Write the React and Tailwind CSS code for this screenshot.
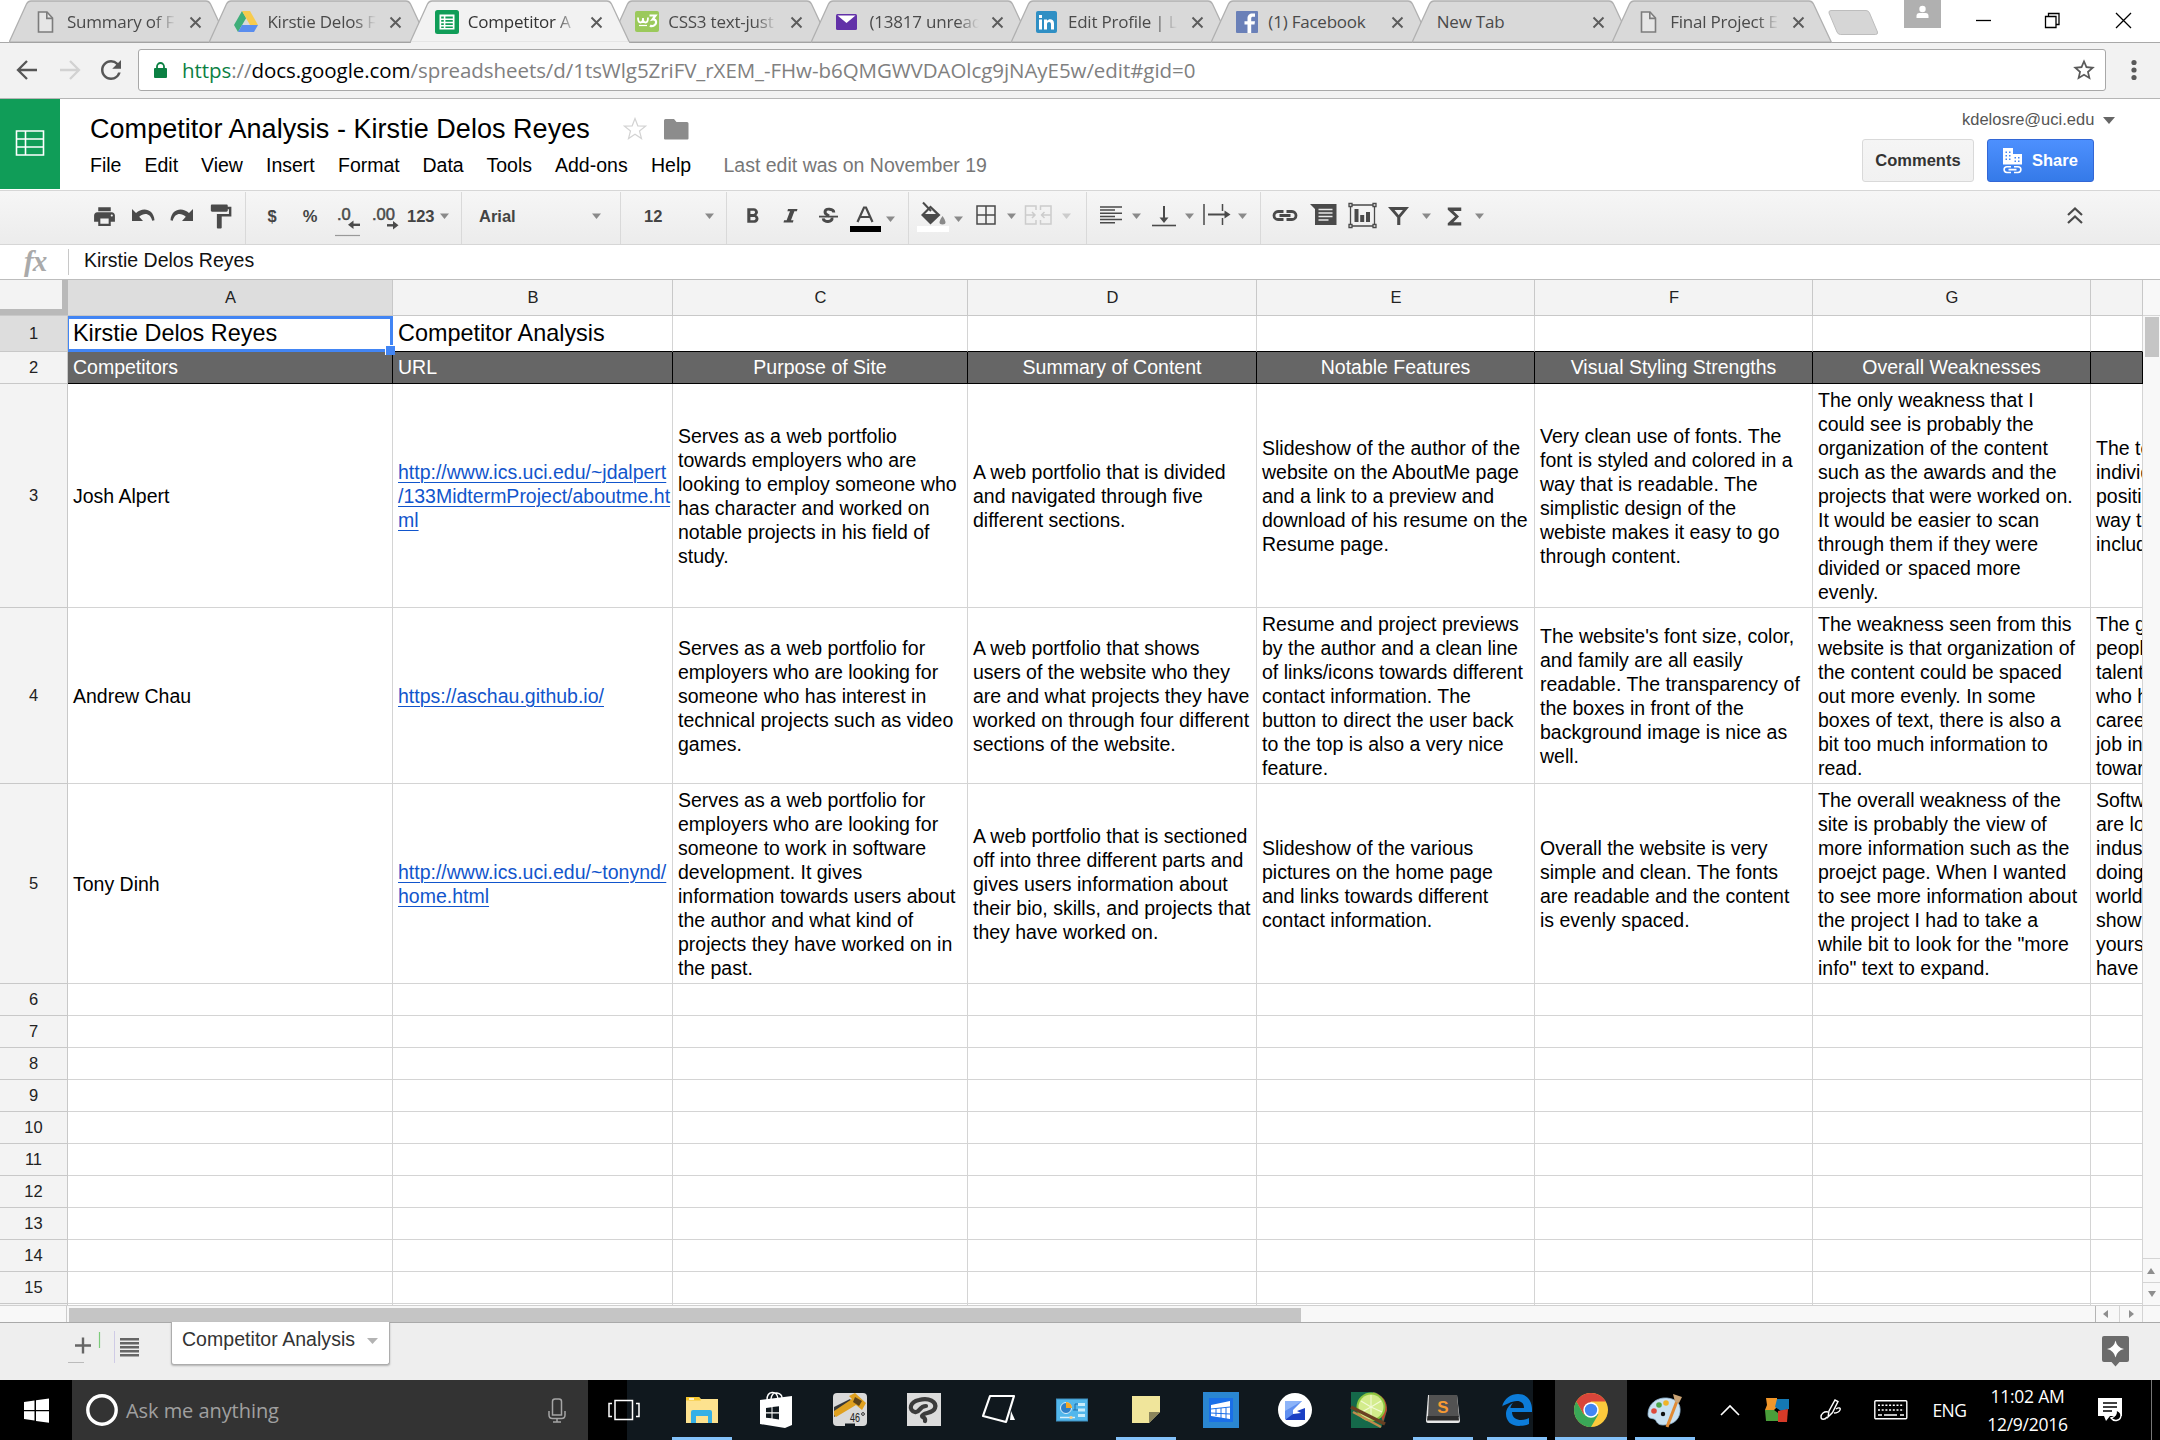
import React from "react";
import { MdPrint, MdFormatPaint, MdFormatBold, MdFunctions, MdStarBorder, MdRefresh } from "react-icons/md";

const UI = "font-['Open_Sans','Noto_Sans',sans-serif]";

/* ---------- browser tabs ---------- */

const PageIcon = () => (
  <svg className="ml-[3px] mr-[13px] h-[24px] w-[17px] shrink-0" viewBox="0 0 17 24">
    <path d="M1.5 2h8.5l5.5 6v14h-14z" fill="#e6e6e6" stroke="#7c7c7c" strokeWidth="1.600" />
    <path d="M9.8 2v6.4h5.6" fill="none" stroke="#7c7c7c" strokeWidth="1.600" />
  </svg>
);

const DriveIcon = () => (
  <svg className="mr-[9px] h-[22px] w-[24px] shrink-0" viewBox="0 0 24 22">
    <path d="M8 0l4.2 7L4 21 0 14z" fill="#3fae79" />
    <path d="M8 0h8l8 14h-8z" fill="#f7cb4d" />
    <path d="M8 14h16l-4 7H4z" fill="#5a8dee" />
  </svg>
);

const SheetsIcon = () => (
  <svg className="mr-[9px] h-[24px] w-[24px] shrink-0" viewBox="0 0 24 24">
    <rect width="24" height="24" rx="2.5" fill="#109d58" />
    <rect x="4.500" y="4.500" width="15" height="15" fill="#fff" />
    <path d="M6.200 6.500h2.600v2H6.200zm4.200 0h7.400v2h-7.400zM6.200 10h2.600v1.800H6.200zm4.200 0h7.400v1.800h-7.400zM6.200 13.200h2.600V15H6.200zm4.200 0h7.400V15h-7.400zM6.200 16.400h2.600v1.700H6.200zm4.200 0h7.400v1.700h-7.400z" fill="#109d58" />
  </svg>
);

const W3Icon = () => (
  <svg className="mr-[9px] h-[21px] w-[24px] shrink-0" viewBox="0 0 24 21">
    <rect width="24" height="21" rx="2" fill="#9bc95b" />
    <path d="M3 6.500c0 3.500.5 5 2.500 5S8 10 8 7c0 3 .5 4.500 2.500 4.500S13 10 13 6.500" fill="none" stroke="#fff" strokeWidth="1.800" />
    <path d="M14.500 4.500h6L17.500 8.500c2.500-.5 4 1 3.500 3.500s-4 4-6 2.500" fill="none" stroke="#fff" strokeWidth="2.200" />
    <path d="M4 14.500h8" stroke="#fff" strokeWidth="1.200" />
  </svg>
);

const MailIcon = () => (
  <svg className="mr-[13px] h-[16px] w-[21px] shrink-0" viewBox="0 0 21 16">
    <rect width="21" height="16" rx="1.500" fill="#6231a8" />
    <path d="M1.500 1.500h18L10.500 9z" fill="#fff" />
  </svg>
);

const LinkedInIcon = () => (
  <svg className="mr-[11px] h-[22px] w-[21px] shrink-0" viewBox="0 0 21 22">
    <rect width="21" height="22" rx="2" fill="#2f8fc4" />
    <path d="M3 8.500h3V18.500H3zM3 4h3v3H3zM8 8.500h3v1.300c1.800-2.400 7-2.300 7 2.700v6h-3v-5.300c0-3-4-2.800-4 0v5.300H8z" fill="#fff" />
  </svg>
);

const FacebookIcon = () => (
  <svg className="mr-[10px] h-[22px] w-[22px] shrink-0" viewBox="0 0 22 22">
    <rect width="22" height="22" rx="1" fill="#6a80b8" />
    <path d="M11.500 22v-8.500H8.500v-3.300h3V7.500c0-3.500 2-5 4.800-5H19v3.300h-2c-1.400 0-1.800.6-1.800 1.800v2.600H19l-.5 3.300h-3.300V22z" fill="#fff" />
  </svg>
);

const TABS = [
  { label: "Summary of F", icon: PageIcon },
  { label: "Kirstie Delos F", icon: DriveIcon },
  { label: "Competitor A", icon: SheetsIcon, active: true },
  { label: "CSS3 text-just", icon: W3Icon },
  { label: "(13817 unread", icon: MailIcon },
  { label: "Edit Profile | L", icon: LinkedInIcon },
  { label: "(1) Facebook", icon: FacebookIcon, short: true },
  { label: "New Tab", icon: null, short: true },
  { label: "Final Project E", icon: PageIcon },
];

function Tab({ tab }) {
  const Icon = tab.icon;
  return (
    <div className={`relative flex h-[43px] w-[200.400px] shrink-0 items-center ${tab.active ? "z-10" : ""}`}>
      <svg className="absolute left-0 top-0 h-[43px] w-[222px]" viewBox="0 0 222 43">
        <path
          d="M0 42.500L17.500 4q1.500-3 4.500-3H197q3 0 4.500 3L219.500 42.500z"
          fill={tab.active ? "#f2f2f2" : "#d9d9d9"}
          stroke="#b0b0b0"
          strokeWidth="1.300"
        />
        <path d="M1 42.500H219" stroke={tab.active ? "#f2f2f2" : "#a3a3a3"} strokeWidth="1.400" />
      </svg>
      <div className="relative flex items-center pl-[25px]">
        {Icon && <Icon />}
        <div
          className={`${UI} h-[26px] overflow-hidden whitespace-pre text-[17px] leading-[26px] tracking-[-0.220px] ${
            tab.active ? "text-[#333]" : "text-[#4a4a4a]"
          } ${tab.short ? "w-[116px]" : "w-[109px] [mask-image:linear-gradient(90deg,#000_80%,transparent)]"}`}
        >
          {tab.label}
        </div>
      </div>
      <svg className="absolute left-[180px] top-[16px] h-[13px] w-[13px]" viewBox="0 0 13 13">
        <path d="M1.500 1.500l10 10m0-10l-10 10" stroke="#5c5c5c" strokeWidth="1.900" />
      </svg>
    </div>
  );
}

function TabStrip() {
  return (
    <div className="flex h-[43px] border-b border-[#a9a9a9] bg-white pl-[9px]">
      {TABS.map((t) => <Tab key={t.label} tab={t} />)}
      <svg className="ml-[14px] mt-[9px] h-[27px] w-[54px] shrink-0" viewBox="0 0 54 27">
        <path d="M4 1.500h35q2.500 0 3.500 2.500l8 19q.5 2.500-2 2.500h-35q-2.500 0-3.500-2.500L2 4q-.5-2.500 2-2.500z" fill="#d6d6d6" stroke="#bdbdbd" />
      </svg>
      <svg className="ml-[23px] h-[28px] w-[37px] shrink-0" viewBox="0 0 37 28">
        <path d="M0 0h37v28H0z" fill="#b0b0b0" />
        <circle cx="18.500" cy="9" r="3.200" fill="#fff" />
        <path d="M12.500 18v-2q0-3 3-3h6q3 0 3 3v2z" fill="#fff" />
      </svg>
      <svg className="ml-[34px] mt-[10px] h-[20px] w-[18px] shrink-0" viewBox="0 0 18 20"><path d="M1 10.500h15" stroke="#000" strokeWidth="1.300" /></svg>
      <svg className="ml-[51px] mt-[12px] h-[17px] w-[17px] shrink-0" viewBox="0 0 17 17">
        <path d="M1.500 4.500h10.500v11H1.500zM4.500 4.500v-3H15v11h-3" fill="none" stroke="#000" strokeWidth="1.300" />
      </svg>
      <svg className="ml-[54px] mt-[12px] h-[17px] w-[17px] shrink-0" viewBox="0 0 17 17">
        <path d="M1 1l15 15M16 1L1 16" stroke="#000" strokeWidth="1.300" />
      </svg>
    </div>
  );
}

function AddressBar() {
  return (
    <div className="flex h-[56px] items-center border-b border-[#b6b6b6] bg-[#f2f2f2] pb-[2px]">
      <svg className="ml-[16px] h-[22px] w-[22px] shrink-0" viewBox="0 0 22 22">
        <path d="M21 11H2.500M11 2L2 11l9 9" fill="none" stroke="#565656" strokeWidth="2.300" />
      </svg>
      <svg className="ml-[21px] h-[22px] w-[22px] shrink-0" viewBox="0 0 22 22">
        <path d="M1 11h18.500M11 2l9 9-9 9" fill="none" stroke="#d2d2d2" strokeWidth="2.300" />
      </svg>
      <MdRefresh className="ml-[15px] size-[30px] shrink-0 text-[#565656]" />
      <div className="ml-[12px] flex h-[42px] w-[1968px] items-center rounded-[3px] border border-[#a8a8a8] bg-white">
        <svg className="ml-[15px] h-[16px] w-[13px] shrink-0" viewBox="0 0 13 16">
          <rect y="6" width="13" height="10" rx="1" fill="#0b8043" />
          <path d="M3 7V4.500a3.500 3.500 0 017 0V7" fill="none" stroke="#0b8043" strokeWidth="1.800" />
        </svg>
        <div className={`${UI} ml-[15px] flex-1 whitespace-pre text-[20.500px] leading-[30px] tracking-[-0.060px] text-[#808080]`}>
          <span className="text-[#0b8043]">https</span>://<span className="text-black">docs.google.com</span>
          /spreadsheets/d/1tsWlg5ZriFV_rXEM_-FHw-b6QMGWVDAOlcg9jNAyE5w/edit#gid=0
        </div>
        <MdStarBorder className="mr-[8px] size-[26px] shrink-0 text-[#5a5a5a]" />
      </div>
      <svg className="ml-[24px] h-[24px] w-[8px] shrink-0" viewBox="0 0 8 24">
        <g fill="#5a5a5a"><circle cx="4" cy="4.500" r="2.600" /><circle cx="4" cy="12" r="2.600" /><circle cx="4" cy="19.500" r="2.600" /></g>
      </svg>
    </div>
  );
}

/* ---------- document header ---------- */

function DocHeader() {
  return (
    <div className="flex h-[91px] bg-white">
      <div className="flex h-[90px] w-[60px] items-center justify-center bg-[#109d58]">
        <svg className="mt-[-3px] h-[26px] w-[30px]" viewBox="0 0 30 26">
          <path d="M1.500 1h27v24h-27zM1.500 9h27M1.500 17h27M10.500 1v24" fill="none" stroke="#fff" strokeWidth="1.600" />
        </svg>
      </div>
      <div className="flex flex-1 flex-col pl-[30px]">
        <div className="flex h-[52px] items-center">
          <div className="mt-[8px] w-[533px] whitespace-pre text-[27px] leading-[36px] tracking-[0.040px] text-black">Competitor Analysis - Kirstie Delos Reyes</div>
          <svg className="mt-[8px] h-[24px] w-[24px]" viewBox="0 0 24 24">
            <path d="M12 1.500l2.800 7.300 7.700.3-6 4.900 2 7.600L12 17.300l-6.500 4.300 2-7.600-6-4.900 7.700-.3z" fill="none" stroke="#d3d3d3" strokeWidth="1.200" />
          </svg>
          <svg className="ml-[17px] mt-[8px] h-[22px] w-[25px]" viewBox="0 0 25 22">
            <path d="M0 2.500Q0 1 1.500 1H10l2.500 3H23q1.500 0 1.500 1.500v15q0 1-1 1H1q-1 0-1-1z" fill="#8c8c8c" />
          </svg>
        </div>
        <div className="flex h-[30px] items-center whitespace-pre text-[19.500px] text-black">
          <span className="w-[54.500px]">File</span>
          <span className="w-[56.500px]">Edit</span>
          <span className="w-[65px]">View</span>
          <span className="w-[72px]">Insert</span>
          <span className="w-[84.500px]">Format</span>
          <span className="w-[64px]">Data</span>
          <span className="w-[68.500px]">Tools</span>
          <span className="w-[96px]">Add-ons</span>
          <span className="w-[72.500px]">Help</span>
          <span className="pb-[1px] text-[#777]">Last edit was on November 19</span>
        </div>
      </div>
      <div className="flex w-[298px] flex-col">
        <div className="mt-[10px] flex h-[20px] items-center pl-[100px] text-[16.500px] text-[#555]">
          <span className="w-[141px] whitespace-pre">kdelosre@uci.edu</span>
          <svg className="mt-[3px] h-[7px] w-[12px]" viewBox="0 0 12 7"><path d="M0 0h12L6 7z" fill="#666" /></svg>
        </div>
        <div className="mt-[10px] flex">
          <div className="flex h-[43px] w-[112px] items-center justify-center rounded-[3px] border border-[#d9d9d9] bg-gradient-to-b from-[#f5f5f5] to-[#f1f1f1] text-[16.500px] font-bold text-[#333]">Comments</div>
          <div className="ml-[13px] flex h-[43px] w-[107px] items-center rounded-[3px] border border-[#3367d6] bg-gradient-to-b from-[#4d90fe] to-[#357ae8] text-[16.500px] font-bold text-white">
            <svg className="ml-[14px] mr-[9px] h-[27px] w-[21px]" viewBox="0 0 21 27">
              <path d="M1 1h10v6h9v10.500H1z" fill="#fff" />
              <path d="M3.500 4.500H5V6H3.500zm3.500 0h1.500V6H7zM3.500 8H5v1.500H3.500zM7 8h1.500v1.500H7zm-3.500 3.500H5V13H3.500zm3.500 0h1.500V13H7zm5.500-1.500H14v1.500h-1.500zm3.500 0h1.500v1.500H16zm-3.500 3.500H14V15h-1.500zm3.500 0h1.500V15H16z" fill="#4285f4" />
              <path d="M9 19.700H5a2.900 2.900 0 000 5.800h4m3-5.800h4a2.900 2.900 0 010 5.800h-4M6.500 22.600h8" fill="none" stroke="#fff" strokeWidth="1.600" />
            </svg>
            Share
          </div>
        </div>
      </div>
    </div>
  );
}

/* ---------- toolbar ---------- */

const INK = "#4a4a4a";

const Draw = ({ w, className, children }) => (
  <svg className={`shrink-0 ${className}`} width={w} height="52" viewBox={`0 0 ${w} 52`}>{children}</svg>
);

const Caret = ({ className, low, faint }) => (
  <Draw w={9} className={className}>
    <path d={low ? "M0 24.500h9l-4.500 5.500z" : "M0 21.500h9l-4.500 5.500z"} fill={faint ? "#ccc" : "#8a8a8a"} />
  </Draw>
);

const Glyph = ({ className, children }) => (
  <div className={`flex h-[49px] shrink-0 items-center justify-center text-[#4a4a4a] ${className}`}>{children}</div>
);

const Label = ({ className, children }) => (
  <div className={`flex h-[49px] shrink-0 items-center whitespace-pre text-[16.500px] font-bold text-[#444] ${className}`}>{children}</div>
);

function Toolbar() {
  return (
    <div className="flex h-[55px] border-y border-[#d6d6d6] bg-gradient-to-b from-[#f6f6f6] to-[#ececec] pt-[1px]">
      <div className="flex w-[246px] border-r border-[#d9d9d9]">
        <Glyph className="ml-[94px] w-[21px]"><MdPrint className="size-[25px] shrink-0" /></Glyph>
        <Draw w={23} className="ml-[17px]">
          <path d="M0 17v12h11l-3.800-4.200c5-4.300 11-3.800 13 4l2.300-.6C21.500 16.500 10.500 15 4 21z" fill={INK} />
        </Draw>
        <Draw w={23} className="ml-[15px]">
          <path d="M23 17v12H12l3.800-4.200c-5-4.300-11-3.800-13 4L.5 28.200C1.500 16.500 12.500 15 19 21z" fill={INK} />
        </Draw>
        <Glyph className="ml-[16px] w-[22px]"><MdFormatPaint className="size-[29px] shrink-0" /></Glyph>
      </div>
      <div className="flex w-[216px] border-r border-[#d9d9d9]">
        <Label className="ml-[17px] w-[18px] justify-center">$</Label>
        <Label className="ml-[19px] w-[20px] justify-center">%</Label>
        <Draw w={26} className="ml-[15px]">
          <text x="2" y="28" fontFamily="Liberation Sans" fontSize="16.500" fill={INK} stroke={INK} strokeWidth=".5">.0</text>
          <path d="M25 32.800H15" stroke={INK} strokeWidth="2.400" /><path d="M18.500 28.500v8.600l-5.500-4.300z" fill={INK} />
          <path d="M0 43.500h25" stroke="#999" strokeWidth="1.200" />
        </Draw>
        <Draw w={28} className="ml-[11px]">
          <text x="0" y="28" fontFamily="Liberation Sans" fontSize="16.500" fill={INK} stroke={INK} strokeWidth=".5">.00</text>
          <path d="M15 33.300h9" stroke={INK} strokeWidth="2.400" /><path d="M21 29v8.600l5.500-4.300z" fill={INK} />
        </Draw>
        <Label className="ml-[7px] w-[27px]">123</Label>
        <Caret className="ml-[6px]" />
      </div>
      <div className="flex w-[159px] border-r border-[#d9d9d9]">
        <Label className="ml-[17px] w-[80px]">Arial</Label>
        <Caret className="ml-[33px]" />
      </div>
      <div className="flex w-[106px] border-r border-[#d9d9d9]">
        <Label className="ml-[23px] w-[24px]">12</Label>
        <Caret className="ml-[37px]" />
      </div>
      <div className="flex w-[182px] border-r border-[#d9d9d9]">
        <Glyph className="ml-[17px] w-[16px]"><MdFormatBold className="size-[25px] shrink-0" /></Glyph>
        <Draw w={18} className="ml-[22px]">
          <path d="M6 17h9.500l-.6 2.300h-2.500l-3.400 9h2.500l-.6 2.300H1.500l.6-2.300h2.500l3.400-9H5.400z" fill={INK} />
        </Draw>
        <Draw w={19} className="ml-[19px]">
          <path d="M14.800 20.500c0-4-8.500-4.600-8.800-.6-.2 2.600 2.500 3.200 4.200 3.900M13 25.500c1.200 5-8.500 5.500-8.800.8" fill="none" stroke={INK} strokeWidth="2.900" />
          <path d="M0 24.600h19" stroke={INK} strokeWidth="1.800" />
        </Draw>
        <Draw w={32} className="ml-[12px]">
          <path d="M7.500 30L14 15.500h2L22.500 30M10.300 25h9.500" fill="none" stroke={INK} strokeWidth="2.200" />
          <path d="M0 34h31v6H0z" fill="#000" />
        </Draw>
        <Caret className="ml-[4px]" low />
      </div>
      <div className="flex w-[178px] border-r border-[#d9d9d9]">
        <Draw w={32} className="ml-[8px]">
          <path d="M13.500 13.500l10 9.500-10 9.500L4 23z" fill={INK} />
          <path d="M13.500 16.500l5.500 5.500H8z" fill="#f2f2f2" />
          <path d="M6 10.500l8 8.500" stroke={INK} strokeWidth="2" />
          <path d="M25.500 24q6 8.500 0 8.500t0-8.500z" fill="#8a8a8a" />
          <path d="M0 34h32v6H0z" fill="#fff" />
        </Draw>
        <Caret className="ml-[5px]" low />
        <Draw w={21} className="ml-[13px]">
          <path d="M1 14h18v18H1zM10 14v18M1 23h18" fill="none" stroke={INK} strokeWidth="1.500" />
        </Draw>
        <Caret className="ml-[10px]" />
        <Draw w={29} className="ml-[8px]">
          <path d="M12 18v-4H1.500v18H12v-4M16.500 18v-4H27v18H16.500v-4M2 23h9M8 20l3 3-3 3M27 23h-9M20.500 20l-3 3 3 3" fill="none" stroke="#ccc" strokeWidth="1.500" />
        </Draw>
        <Caret className="ml-[9px]" faint />
      </div>
      <div className="flex w-[174px] border-r border-[#d9d9d9]">
        <Draw w={22} className="ml-[13px]">
          <path d="M0 15h22M0 18h15M0 21.200h22M0 24.400h15M0 27.600h22M0 30.800h15" stroke={INK} strokeWidth="1.500" />
        </Draw>
        <Caret className="ml-[10px]" />
        <Draw w={26} className="ml-[10px]">
          <path d="M13 14v14" stroke={INK} strokeWidth="2" /><path d="M8.500 25.500h9L13 31z" fill={INK} />
          <path d="M1 33.500h24" stroke={INK} strokeWidth="1.600" />
        </Draw>
        <Caret className="ml-[8px]" />
        <Draw w={28} className="ml-[9px]">
          <path d="M1 12v21M19.500 12v7M19.500 26v7" stroke={INK} strokeWidth="1.500" />
          <path d="M5 22.500h17" stroke={INK} strokeWidth="2" /><path d="M21.500 18.500v8l6-4z" fill={INK} />
        </Draw>
        <Caret className="ml-[7px]" />
      </div>
      <div className="flex flex-1">
        <Draw w={29} className="ml-[10px]">
          <path d="M12.500 19.500H7a4 4 0 000 8h5.500M15.500 19.500H21a4 4 0 010 8h-5.500M8.500 23.500h11" fill="none" stroke={INK} strokeWidth="2.800" />
        </Draw>
        <Draw w={28} className="ml-[10px]">
          <path d="M0 12h26.500v21H5V17z" fill={INK} />
          <path d="M8.500 17.500h14M8.500 21h14M8.500 24.500h14M8.500 28h10" stroke="#e8e8e8" strokeWidth="1.300" />
        </Draw>
        <Draw w={29} className="ml-[10px]">
          <path d="M2.500 13h24v21h-24z" fill="none" stroke={INK} strokeWidth="1.300" />
          <path d="M6.500 17h4v13h-4zM12.200 23h4v7h-4zM18 20h4v10h-4z" fill={INK} />
          <path d="M1 11.500h3v3H1zM25 11.500h3v3h-3zM1 32.500h3v3H1zM25 32.500h3v3h-3z" fill="#f2f2f2" stroke={INK} strokeWidth="1.300" />
        </Draw>
        <Draw w={22} className="ml-[11px]">
          <path d="M0 15h21l-8.700 10.500V33H9.200v-7.500zM6.500 18l4.200 5 4.200-5z" fill={INK} fillRule="evenodd" />
        </Draw>
        <Caret className="ml-[12px]" />
        <Glyph className="ml-[15px] w-[16px]"><MdFunctions className="size-[27px] shrink-0" /></Glyph>
        <Caret className="ml-[13px]" />
        <Draw w={18} className="ml-[582px]">
          <path d="M2 23l7-6.500 7 6.500M2 31l7-6.500 7 6.500" fill="none" stroke={INK} strokeWidth="2.200" />
        </Draw>
      </div>
    </div>
  );
}

function FormulaBar() {
  return (
    <div className="flex h-[35px] items-center border-b border-[#bdbdbd] bg-white">
      <div className="w-[68px] pb-[3px] pl-[24px] font-['Liberation_Serif',serif] text-[29px] font-bold italic leading-[30px] tracking-[-1px] text-[#aaa]">fx</div>
      <div className="h-[26px] w-px bg-[#c8c8c8]" />
      <div className="whitespace-pre pb-[3px] pl-[15px] text-[19.500px] text-[#111]">Kirstie Delos Reyes</div>
    </div>
  );
}

/* ---------- sheet ---------- */

const COLS = [
  ["A", "w-[325px]"], ["B", "w-[280px]"], ["C", "w-[295px]"], ["D", "w-[289px]"],
  ["E", "w-[278px]"], ["F", "w-[278px]"], ["G", "w-[278px]"], ["", "w-[52px]"],
];

const HEADINGS = ["Competitors", "URL", "Purpose of Site", "Summary of Content", "Notable Features", "Visual Styling Strengths", "Overall Weaknesses", ""];

const ROWS = [
  {
    n: 3, h: "h-[224px]",
    cells: [
      ["Josh Alpert"],
      ["http://www.ics.uci.edu/~jdalpert", "/133MidtermProject/aboutme.ht", "ml"],
      ["Serves as a web portfolio", "towards employers who are", "looking to employ someone who", "has character and worked on", "notable projects in his field of", "study."],
      ["A web portfolio that is divided", "and navigated through five", "different sections."],
      ["Slideshow of the author of the", "website on the AboutMe page", "and a link to a preview and", "download of his resume on the", "Resume page."],
      ["Very clean use of fonts. The", "font is styled and colored in a", "way that is readable. The", "simplistic design of the", "webiste makes it easy to go", "through content."],
      ["The only weakness that I", "could see is probably the", "organization of the content", "such as the awards and the", "projects that were worked on.", "It would be easier to scan", "through them if they were", "divided or spaced more", "evenly."],
      ["The te", "individ", "positi", "way to", "includ"],
    ],
  },
  {
    n: 4, h: "h-[176px]",
    cells: [
      ["Andrew Chau"],
      ["https://aschau.github.io/"],
      ["Serves as a web portfolio for", "employers who are looking for", "someone who has interest in", "technical projects such as video", "games."],
      ["A web portfolio that shows", "users of the website who they", "are and what projects they have", "worked on through four different", "sections of the website."],
      ["Resume and project previews", "by the author and a clean line", "of links/icons towards different", "contact information. The", "button to direct the user back", "to the top is also a very nice", "feature."],
      ["The website's font size, color,", "and family are all easily", "readable. The transparency of", "the boxes in front of the", "background image is nice as", "well."],
      ["The weakness seen from this", "website is that organization of", "the content could be spaced", "out more evenly. In some", "boxes of text, there is also a", "bit too much information to", "read."],
      ["The g", "people", "talent", "who h", "career", "job in", "toward"],
    ],
  },
  {
    n: 5, h: "h-[200px]",
    cells: [
      ["Tony Dinh"],
      ["http://www.ics.uci.edu/~tonynd/", "home.html"],
      ["Serves as a web portfolio for", "employers who are looking for", "someone to work in software", "development. It gives", "information towards users about", "the author and what kind of", "projects they have worked on in", "the past."],
      ["A web portfolio that is sectioned", "off into three different parts and", "gives users information about", "their bio, skills, and projects that", "they have worked on."],
      ["Slideshow of the various", "pictures on the home page", "and links towards different", "contact information."],
      ["Overall the website is very", "simple and clean. The fonts", "are readable and the content", "is evenly spaced."],
      ["The overall weakness of the", "site is probably the view of", "more information such as the", "proejct page. When I wanted", "to see more information about", "the project I had to take a", "while bit to look for the \"more", "info\" text to expand."],
      ["Softwa", "are lo", "indust", "doing", "world", "show", "yourse", "have"],
    ],
  },
];

const RowHead = ({ n, active }) => (
  <div className={`flex w-[68px] shrink-0 items-center justify-center border-b border-r border-[#c8c8c8] text-[16.500px] text-[#222] ${active ? "bg-[#ddd]" : "bg-[#f3f3f3]"}`}>{n}</div>
);

function Sheet() {
  return (
    <div className="h-[1025px] w-[2143px] shrink-0 overflow-hidden bg-white">
      <div className="flex h-[36px]">
        <div className="h-[36px] w-[68px] shrink-0 border-b border-[#c8c8c8] bg-[#b9b9b9] pb-[6px] pr-[6px]"><div className="h-[29px] bg-[#f3f3f3]" /></div>
        {COLS.map(([c, w], i) => (
          <div key={i} className={`flex shrink-0 items-center justify-center border-b border-r border-[#c8c8c8] pb-px pl-px text-[16.500px] text-[#222] ${w} ${i === 0 ? "bg-[#ddd]" : "bg-[#f3f3f3]"}`}>{c}</div>
        ))}
      </div>
      <div className="relative flex h-[36px]">
        <RowHead n={1} active />
        {COLS.map(([, w], i) => (
          <div key={i} className={`flex shrink-0 items-center whitespace-pre border-b border-r border-b-black border-r-[#d4d4d4] pl-[5px] pt-px text-[23.400px] text-black ${w}`}>
            {["Kirstie Delos Reyes", "Competitor Analysis"][i]}
          </div>
        ))}
        <div className="absolute left-[68px] top-0 z-10 h-[36px] w-[325px] border-y-[3px] border-l border-r-[3px] border-[#4285f4]" />
        <div className="absolute left-[385px] top-[29px] z-10 h-[10px] w-[10px] border-l border-t border-white bg-[#4285f4]" />
      </div>
      <div className="flex h-[32px]">
        <RowHead n={2} />
        {COLS.map(([, w], i) => (
          <div key={i} className={`flex shrink-0 items-center whitespace-pre border-b border-r border-black bg-[#666] pt-px text-[19.500px] text-white ${w} ${i < 2 ? "pl-[5px]" : "justify-center"}`}>{HEADINGS[i]}</div>
        ))}
      </div>
      {ROWS.map((r) => (
        <div key={r.n} className={`flex ${r.h}`}>
          <RowHead n={r.n} />
          {r.cells.map((lines, i) => (
            <div key={i} className={`flex shrink-0 flex-col justify-center overflow-hidden whitespace-pre border-b border-r border-[#d4d4d4] pl-[5px] text-[19.500px] leading-[24px] ${COLS[i][1]} ${i === 1 ? "text-[#1155cc] underline decoration-1 underline-offset-[3px]" : "text-black"}`}>
              {lines.map((l) => <div key={l}>{l}</div>)}
            </div>
          ))}
        </div>
      ))}
      {[6, 7, 8, 9, 10, 11, 12, 13, 14, 15, ""].map((n) => (
        <div key={n} className="flex h-[32px]">
          <RowHead n={n} />
          {COLS.map(([, w], i) => <div key={i} className={`shrink-0 border-b border-r border-[#d4d4d4] ${w}`} />)}
        </div>
      ))}
    </div>
  );
}

const Arrow = ({ d }) => (
  <svg className="h-[10px] w-[10px]" viewBox="0 0 10 10"><path d={d} fill="#8e8e8e" /></svg>
);

function VerticalScroll() {
  return (
    <div className="flex flex-1 flex-col bg-[#f8f8f8]">
      <div className="h-[36px] border-b border-[#d6d6d6]" />
      <div className="ml-[2px] mt-px h-[40px] w-[14px] bg-[#c5c5c5]" />
      <div className="flex-1" />
      <div className="flex h-[24px] items-center justify-center border-t border-[#d4d4d4] pr-px"><Arrow d="M5 2l4 6H1z" /></div>
      <div className="flex h-[23px] items-center justify-center border-t border-[#d4d4d4]"><Arrow d="M5 8l4-6H1z" /></div>
    </div>
  );
}

function HorizontalScroll() {
  return (
    <div className="flex h-[18px] border-b border-t border-b-[#a9a9a9] border-t-[#d0d0d0] bg-[#f8f8f8]">
      <div className="w-[67px] border-r border-[#ccc]" />
      <div className="ml-[2px] mt-[2px] h-[14px] w-[1232px] bg-[#c5c5c5]" />
      <div className="flex-1" />
      <div className="flex w-[24px] items-center justify-center border-l border-[#b5b5b5] pr-[3px]"><Arrow d="M2 5l5-4v8z" /></div>
      <div className="flex w-[24px] items-center justify-center border-x border-[#d4d4d4]"><Arrow d="M8 5L3 1v8z" /></div>
      <div className="w-[17px]" />
    </div>
  );
}

function SheetTabs() {
  return (
    <div className="flex h-[57px] bg-[#eee]">
      <svg className="ml-[68px] mt-[8px] h-[34px] w-[48px]" viewBox="0 0 48 34">
        <path d="M7 14.500h16M15 6.500v16" stroke="#666" strokeWidth="2.400" />
        <path d="M31.500 1v16" stroke="#7ccb7a" strokeWidth="1.200" />
        <path d="M46.500 0v32" stroke="#cfcbe6" />
        <path d="M0 31.500h16" stroke="#bbb" />
      </svg>
      <svg className="ml-[4px] mt-[14px] h-[20px] w-[19px]" viewBox="0 0 19 20">
        <path d="M0 2.200h19M0 6.200h19M0 10.200h19M0 14.200h19M0 18.200h19" stroke="#666" strokeWidth="2.600" />
      </svg>
      <div className="-mt-px ml-[32px] flex h-[43px] w-[219px] justify-between rounded-b-[3px] border border-t-0 border-[#adadad] bg-white pl-[10px] pr-[11px] shadow-[0_1px_2px_rgba(0,0,0,.25)]">
        <span className="whitespace-pre pt-[5px] text-[19.500px] leading-[24px] tracking-[0.040px] text-[#333]">Competitor Analysis</span>
        <svg className="mt-[16px] h-[6px] w-[11px]" viewBox="0 0 11 6"><path d="M0 0h11L5.500 6z" fill="#b3b3b3" /></svg>
      </div>
      <svg className="ml-[1712px] mt-[13px] h-[32px] w-[27px]" viewBox="0 0 27 32">
        <path d="M2 0h23q2 0 2 2v22q0 2-2 2h-7.500l-4 4.500-4-4.500H2q-2 0-2-2V2q0-2 2-2z" fill="#6b6b6b" />
        <path d="M13.500 4.500q1.500 7 8.500 8.500-7 1.500-8.500 8.500Q12 14.500 5 13q7-1.500 8.500-8.500z" fill="#fff" />
      </svg>
    </div>
  );
}

/* ---------- taskbar ---------- */

const APPS = [
  {
    name: "files", open: true,
    art: (
      <>
        <path d="M-16-13h13l2 2h17v24h-32z" fill="#fde28f" /><path d="M-16-13h13l2 3.500h-15z" fill="#f5c62f" />
        <path d="M-13-11h5" stroke="#fff" strokeWidth="1.500" />
        <path d="M-11 13V2q0-2 2-2H8q2 0 2 2v11H6V6H-6v7z" fill="#35b0e6" />
      </>
    ),
  },
  {
    name: "store",
    art: (
      <>
        <path d="M-16-10l32-4v29l-7 3-25-4z" fill="#fff" />
        <path d="M-9-10q0-7 5-7.500t6 6M-5-11q1-7 6-6t5 5" fill="none" stroke="#fff" strokeWidth="1.400" />
        <path d="M-10-2l5.500-.7v5H-10zM-3.500-2.900l6.500-.8v6H-3.500zM-10 3.500h5.500v4.800l-5.500-.6zM-3.500 3.500H3v6l-6.500-.9z" fill="#10181e" />
      </>
    ),
  },
  {
    name: "thermal",
    art: (
      <>
        <rect x="-17" y="-17" width="34" height="33" rx="4" fill="#d9d9d9" /><path d="M-5 13.500H5v3H-5z" fill="#10181e" />
        <path d="M-16-3L0-11l4 5-20 13z" fill="#383838" />
        <path d="M-16 1L2-11l-3-3 6-3L16-7l-4 7-6-5-20 12-2-2z" fill="#dfa01f" /><path d="M5-13l7 4-3 5-6-4z" fill="#5f4418" />
        <text x="0" y="12" fontFamily="Liberation Sans" fontSize="12" textLength="10" lengthAdjust="spacingAndGlyphs" fill="#222">46</text>
        <circle cx="13" cy="4" r="1.400" fill="none" stroke="#333" />
      </>
    ),
  },
  {
    name: "studio",
    art: (
      <>
        <path d="M-17-17h34v33h-34z" fill="#dcdcdc" />
        <path d="M-9 2C-16 0-14-8-5-10 5-13 13-8 11-2 9 4-1 2-2 6 -2 8 2 7 1 11M-9 2C-4 3-5-4 2-4" fill="none" stroke="#3c3c3c" strokeWidth="4.200" strokeLinecap="round" />
      </>
    ),
  },
  {
    name: "tablet",
    art: <><path d="M-8-14H16L8 12l-23-6z" fill="none" stroke="#fff" strokeWidth="2.200" strokeLinejoin="round" /><path d="M13 1l4 9h-5z" fill="#fff" /></>,
  },
  {
    name: "panel",
    art: (
      <>
        <rect x="-15.500" y="-11" width="31" height="22" fill="#52b7ec" stroke="#3f8fc0" />
        <circle cx="-6" cy="-2" r="5.500" fill="#2f80c8" stroke="#d9f0fc" /><path d="M-6-2v-6a6 6 0 016 6z" fill="#f6a623" />
        <path d="M6-7h7v3H6zM6-1.500h7v3H6zM6 4h7v3H6z" fill="#c8ecfb" /><path d="M1 0h2v-6h3M3 0h3" stroke="#1c6fae" fill="none" />
        <path d="M-12 7.500H3" stroke="#d9f0fc" strokeWidth="1.500" /><circle cx="-1" cy="7.500" r="1.600" fill="#f6d08a" />
      </>
    ),
  },
  {
    name: "notes", open: true,
    art: <><path d="M-14-14h28V2L3 13h-17z" fill="#f0e59b" /><path d="M14 2H3v11z" fill="#8b855c" /></>,
  },
  {
    name: "news",
    art: (
      <>
        <path d="M-18-18h36v36h-36z" fill="#2a86d1" /><path d="M-12-12h24v24h-24z" fill="#1a6fe8" />
        <path d="M-10-5L9-9V9l-19-3z" fill="#fff" /><path d="M-10-1L9-3M-10 3l19 1M-5-1v7M0-2V8M5-2V9" stroke="#1a6fe8" />
      </>
    ),
  },
  {
    name: "gsuite",
    art: (
      <>
        <circle r="17" fill="#fff" /><path d="M-10-9H7L-2 0v4l-2 5h-6z" fill="#5f8ff0" /><path d="M-10-9H7l-5 3-12 7z" fill="#8db4f8" />
        <path d="M10-2v12H-10L-2 4l8-1-4-2z" fill="#1a3fc4" />
      </>
    ),
  },
  {
    name: "lime",
    art: (
      <>
        <path d="M-18-18h24q12 6 12 18-2 10-6 18h-30z" fill="#15694a" /><path d="M4-18q14 4 14 18l-4 12z" fill="#b54a32" />
        <circle cx="2" cy="-3" r="14.500" fill="#8cc63f" /><circle cx="2" cy="-3" r="12.500" fill="#d3ec8c" />
        <path d="M2-3V-15M2-3l10-6M2-3l-10-6M2-3l11 5M2-3v11M2-3L-9 3" stroke="#f2fad6" strokeWidth="1.100" />
        <path d="M-18-3L16 14" stroke="#6a4022" strokeWidth="3.500" /><path d="M-16 2L12 17" stroke="#c08a4c" strokeWidth="2.500" />
      </>
    ),
  },
  {
    name: "sublime", open: true,
    art: (
      <>
        <path d="M-15-15h29l3 26q0 2-2 2h-30q-2 0-2-2z" fill="#e8e8e8" /><path d="M-14-15h28l2 22h-31z" fill="#525252" /><path d="M-15.500 6h31l.5 4.500h-32z" fill="#2c2c2c" />
        <text x="-5.700" y="2.500" fontFamily="Liberation Sans" fontWeight="bold" fontSize="17" fill="#f79a33">S</text>
      </>
    ),
  },
  {
    name: "edge", open: true,
    art: <path d="M-15-3C-13-12-6-16 1-16 10-16 15-9 15-1v3H-5c0 6 5 8 9 8 3 0 6-1 8-2v6c-3 1.500-7 2-10 2-8 0-13-5-13-12 0-5 3-9 7-11-2 2-2.500 4-2.500 5H7c0-5-3-7-7-7-6 0-11 4-15 5z" fill="#0c7cd9" />,
  },
  {
    name: "chrome", open: true, active: true,
    art: (
      <>
        <circle r="17" fill="#fcc93c" /><path d="M-14.700-8.500A17 17 0 0114.700-8.500H0L-7.400 4.200z" fill="#d9453a" />
        <path d="M-14.700-8.500A17 17 0 000 17L7.400 4.200-7.400 4.200z" fill="#3aa757" />
        <circle r="7.700" fill="#fff" /><circle r="6.200" fill="#4285f4" />
      </>
    ),
  },
  {
    name: "paint", open: true,
    art: (
      <>
        <path d="M2-12C12-11 16-6 15 2S8 15-2 15c-7 0-6-5-9-6s-6 0-6-5C-17-6-8-13 2-12z" fill="#c9e1f2" stroke="#8fb4d0" strokeWidth=".8" />
        <circle cx="-11" cy="1" r="2.800" fill="#dd4a3c" /><circle cx="-6" cy="-5" r="2.800" fill="#4ba64a" /><circle cx="1" cy="-7" r="2.800" fill="#f0b429" />
        <circle cx="-2" cy="4" r="2.200" fill="#111" />
        <path d="M12-9L2 17" stroke="#e08a35" strokeWidth="3" /><path d="M8-16l9 3-3 6-4-1z" fill="#caa374" />
      </>
    ),
  },
];

function Taskbar() {
  return (
    <div className={`${UI} flex h-[60px] bg-[linear-gradient(90deg,#000_627px,#10181e_627px,#10181e_1533px,#000_1533px)] text-white`}>
      <div className="flex w-[72px] items-center justify-center">
        <svg className="h-[25px] w-[25px]" viewBox="0 0 25 25"><path d="M0 4l10.500-1.500V12H0zM12 2.200L25 .5V12H12zM0 13.300h10.500v9.200L0 21zM12 13.300h13v11.500L12 23z" fill="#fff" /></svg>
      </div>
      <div className="flex w-[516px] items-center bg-[#333]">
        <svg className="ml-[13px] h-[34px] w-[34px]" viewBox="0 0 34 34"><circle cx="17" cy="17" r="14.200" fill="none" stroke="#fff" strokeWidth="3.400" /></svg>
        <span className="ml-[7px] w-[422px] whitespace-pre pt-[2px] text-[20px] tracking-[-0.060px] text-[#a0a0a0]">Ask me anything</span>
        <svg className="h-[25px] w-[18px]" viewBox="0 0 18 25">
          <path d="M4.500 3.500q0-2.500 2.500-2.500h4q2.500 0 2.500 2.500V17h-9zM1 13v4q0 3.500 3.500 3.500h9q3.500 0 3.500-3.500v-4M9 20.500V24M5 24h8" fill="none" stroke="#a5a5a5" strokeWidth="1.500" />
        </svg>
      </div>
      <div className="flex w-[76.500px] items-center pl-[20px]">
        <svg className="h-[22px] w-[32px]" viewBox="0 0 32 22">
          <path d="M7 1.500h17.500v19H7zM4 4.500H1v13h3M28 4.500h3v13h-3" fill="none" stroke="#fff" strokeWidth="1.500" />
        </svg>
      </div>
      {APPS.map((a) => (
        <div key={a.name} className="flex w-[74.150px] shrink-0 flex-col items-center">
          <div className={`flex h-[57px] w-[72px] items-center justify-center pt-[3px] ${a.active ? "bg-[#333]" : ""}`}>
            <svg className="h-[40px] w-[40px]" viewBox="-20 -20 40 40">{a.art}</svg>
          </div>
          {a.open && <div className={`h-[3px] bg-[#83c1f9] ${a.active ? "w-[72px]" : "w-[60px]"}`} />}
        </div>
      ))}
      <div className="flex flex-1 items-center">
        <svg className="ml-[18px] h-[12px] w-[20px] shrink-0" viewBox="0 0 20 12"><path d="M1 11l9-9 9 9" fill="none" stroke="#fff" strokeWidth="1.600" /></svg>
        <svg className="ml-[25px] h-[24px] w-[24px] shrink-0" viewBox="0 0 24 24">
          <path d="M1 0h11v9L9 12H0l2-5z" fill="#f0962a" /><path d="M12 1h12v10l-8 2-6-4z" fill="#1478b4" />
          <path d="M0 12h9l4 3v8H1z" fill="#4a9e3a" /><path d="M13 13l10-2-1 13h-9z" fill="#d63a28" />
        </svg>
        <svg className="ml-[31px] h-[22px] w-[22px] shrink-0" viewBox="0 0 22 22">
          <path d="M8 18l1-6 6-11 3 1.500-5.500 11zM8 13c-4-1-7 2-7 5s4 3 6 0M16 10c3-2 5-1 4 1s-3 3-6 3" fill="none" stroke="#fff" strokeWidth="1.400" />
        </svg>
        <svg className="ml-[32px] h-[20px] w-[34px] shrink-0" viewBox="0 0 34 20">
          <rect x=".8" y=".8" width="32" height="18" rx="1" fill="none" stroke="#fff" strokeWidth="1.400" />
          <path d="M4 5.200h26M4 10h26" stroke="#fff" strokeWidth="1.500" strokeDasharray="2 1.700" />
          <path d="M4 15h4M10 15h13M26 15h4" stroke="#fff" strokeWidth="1.400" />
        </svg>
        <span className="ml-[24px] w-[34px] whitespace-pre text-[17.500px] tracking-[-0.600px]">ENG</span>
        <div className="ml-[16px] w-[90px] whitespace-pre text-center text-[17.500px] leading-[28px] tracking-[-0.250px]">
          <div>11:02 AM</div>
          <div>12/9/2016</div>
        </div>
        <svg className="ml-[26px] h-[26px] w-[26px] shrink-0" viewBox="0 0 26 26">
          <path d="M0 1h24v18h-12l-4 5-2-5H0z" fill="#fff" /><path d="M5 6h14M5 10h14M5 14h9" stroke="#000" strokeWidth="1.400" />
          <path d="M18 13c1 5-1 7-5 8 3 4 10 3 10-3 0-2-2-4-5-5z" fill="#000" stroke="#fff" strokeWidth="1.400" />
        </svg>
        <div className="ml-[27px] h-[60px] w-px bg-[#777]" />
      </div>
    </div>
  );
}

export default function App() {
  return (
    <div className="flex h-[1440px] w-[2160px] flex-col overflow-hidden bg-white font-['Liberation_Sans',Arial,sans-serif]">
      <TabStrip />
      <AddressBar />
      <DocHeader />
      <Toolbar />
      <FormulaBar />
      <div className="flex h-[1025px]">
        <Sheet />
        <VerticalScroll />
      </div>
      <HorizontalScroll />
      <SheetTabs />
      <Taskbar />
    </div>
  );
}
